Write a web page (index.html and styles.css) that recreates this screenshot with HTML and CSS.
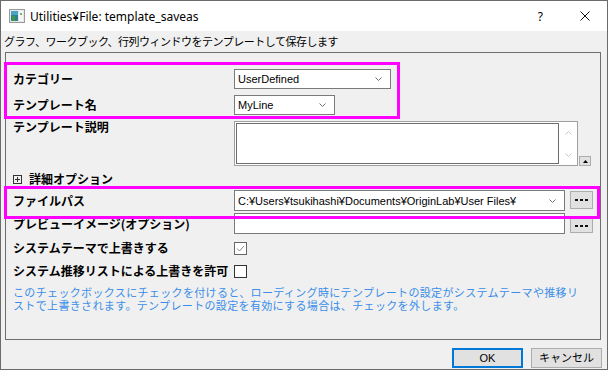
FILE: index.html
```html
<!DOCTYPE html>
<html lang="ja">
<head>
    <meta charset="UTF-8">
    <title>Utilities¥File: template_saveas</title>
    <link rel="stylesheet" href="styles.css">
</head>
<body>
    <div class="window">
        <div class="titlebar">
            <svg class="app-icon" width="16" height="14" viewBox="0 0 16 14">
                <rect x="0.5" y="0.5" width="15" height="13" fill="#e8e8e8" stroke="#9a9a9a"/>
                <rect x="2" y="2" width="7" height="10" fill="#2e7f8f"/>
                <rect x="2" y="2" width="7" height="4" fill="#4aa3c0"/>
                <rect x="3" y="7" width="3" height="5" fill="#3c9a4a"/>
                <rect x="10" y="2" width="4" height="10" fill="#f6f6f6"/>
                <rect x="11" y="4" width="2" height="2" fill="#6fb86f"/>
            </svg>
            <span class="title">Utilities¥File: template_saveas</span>
            <span class="help">?</span>
            <svg class="close" width="10" height="10" viewBox="0 0 10 10">
                <path d="M0.5 0.5 L9.5 9.5 M9.5 0.5 L0.5 9.5" stroke="#111" stroke-width="1"/>
            </svg>
        </div>

        <div class="subtitle">グラフ、ワークブック、行列ウィンドウをテンプレートして保存します</div>

        <div class="panel">
            <div class="row h20">
                <label>カテゴリー</label>
                <div class="ctl">
                    <div class="combo w157">
                        <span>UserDefined</span>
                        <svg class="chev" width="7" height="4" viewBox="0 0 7 4"><polyline points="0.5,0.5 3.5,3.5 6.5,0.5" fill="none" stroke="#707070"/></svg>
                    </div>
                </div>
            </div>

            <div class="row h20 gap6">
                <label>テンプレート名</label>
                <div class="ctl">
                    <div class="combo w101">
                        <span>MyLine</span>
                        <svg class="chev" width="7" height="4" viewBox="0 0 7 4"><polyline points="0.5,0.5 3.5,3.5 6.5,0.5" fill="none" stroke="#707070"/></svg>
                    </div>
                </div>
            </div>

            <div class="row row-memo gap6">
                <label>テンプレート説明</label>
                <div class="ctl bottom">
                    <div class="memo">
                        <div class="memo-field"></div>
                        <div class="memo-scroll">
                            <svg width="7" height="4" viewBox="0 0 7 4"><polyline points="0.5,3.5 3.5,0.5 6.5,3.5" fill="none" stroke="#c6c6c6"/></svg>
                            <svg width="7" height="4" viewBox="0 0 7 4"><polyline points="0.5,0.5 3.5,3.5 6.5,0.5" fill="none" stroke="#c6c6c6"/></svg>
                        </div>
                    </div>
                    <div class="spin">
                        <svg width="5" height="3" viewBox="0 0 5 3"><polygon points="0,3 2.5,0 5,3" fill="#000"/></svg>
                    </div>
                </div>
            </div>

            <div class="row row-more">
                <label class="more">
                    <svg width="9" height="9" viewBox="0 0 9 9"><rect x="0.5" y="0.5" width="8" height="8" fill="none" stroke="#333"/><path d="M2 4.5 H7 M4.5 2 V7" stroke="#333"/></svg>
                    詳細オプション
                </label>
            </div>

            <div class="row h21">
                <label>ファイルパス</label>
                <div class="ctl">
                    <div class="combo w331">
                        <span>C:¥Users¥tsukihashi¥Documents¥OriginLab¥User Files¥</span>
                        <svg class="chev" width="7" height="4" viewBox="0 0 7 4"><polyline points="0.5,0.5 3.5,3.5 6.5,0.5" fill="none" stroke="#707070"/></svg>
                    </div>
                    <div class="dots">
                        <svg width="13" height="2" viewBox="0 0 13 2"><rect x="0" y="0" width="3" height="2" fill="#111"/><rect x="5" y="0" width="3" height="2" fill="#111"/><rect x="10" y="0" width="3" height="2" fill="#111"/></svg>
                    </div>
                </div>
            </div>

            <div class="row h21 gap2">
                <label>プレビューイメージ(オプション)</label>
                <div class="ctl bottom">
                    <div class="field w331"></div>
                    <div class="dots short">
                        <svg width="13" height="2" viewBox="0 0 13 2"><rect x="0" y="0" width="3" height="2" fill="#111"/><rect x="5" y="0" width="3" height="2" fill="#111"/><rect x="10" y="0" width="3" height="2" fill="#111"/></svg>
                    </div>
                </div>
            </div>

            <div class="row h24 gap2">
                <label>システムテーマで上書きする</label>
                <div class="ctl">
                    <div class="check checked">
                        <svg width="11" height="11" viewBox="0 0 11 11"><polyline points="2,5.5 4.5,8 9,3" fill="none" stroke="#8a8a8a" stroke-width="1"/></svg>
                    </div>
                </div>
            </div>

            <div class="row h22">
                <label>システム推移リストによる上書きを許可</label>
                <div class="ctl">
                    <div class="check"></div>
                </div>
            </div>

            <p class="note">このチェックボックスにチェックを付けると、ローディング時にテンプレートの設定がシステムテーマや推移リ<br>ストで上書きされます。テンプレートの設定を有効にする場合は、チェックを外します。</p>

            <div class="highlight hl-top"></div>
            <div class="highlight hl-path"></div>
        </div>

        <div class="footer">
            <button class="btn default">OK</button>
            <button class="btn">キャンセル</button>
        </div>
    </div>
</body>
</html>
```

FILE: styles.css
```css
body {
    margin: 0;
    font-family: "Noto Sans CJK JP", sans-serif;
    color: #000;
}

.window {
    width: 608px;
    height: 370px;
    box-sizing: border-box;
    border: 1px solid #6b6b6b;
    background-color: #f0f0f0;
    display: flex;
    flex-direction: column;
}

.titlebar {
    height: 30px;
    background-color: #fff;
    display: flex;
    align-items: center;
}

.app-icon {
    margin-left: 8px;
}

.title {
    margin-left: 5px;
    font-family: "Noto Sans", "Liberation Sans", sans-serif;
    font-size: 12px;
}

.help {
    margin-left: auto;
    font-family: "Noto Sans", sans-serif;
    font-size: 12px;
}

.close {
    margin-left: 37px;
    margin-right: 17px;
}

.subtitle {
    height: 21px;
    line-height: 21px;
    padding-left: 3px;
    font-size: 11px;
    letter-spacing: -0.5px;
}

.panel {
    position: relative;
    margin-left: 4px;
    width: 596px;
    height: 288px;
    box-sizing: border-box;
    border: 1px solid #6e6e6e;
    padding: 16px 0 0 7px;
}

.row {
    display: grid;
    grid-template-columns: 221px auto;
    align-items: center;
}

.row label {
    font-size: 12px;
    font-weight: bold;
    line-height: 14px;
    white-space: nowrap;
}

.h20 { height: 20px; }
.h21 { height: 21px; }
.h22 { height: 22px; }
.h24 { height: 24px; }
.gap6 { margin-top: 6px; }
.gap2 { margin-top: 2px; }

.ctl {
    display: flex;
    align-items: center;
    gap: 5px;
    height: 100%;
}

.ctl.bottom {
    align-items: flex-end;
}

.combo, .field {
    height: 100%;
    box-sizing: border-box;
    border: 1px solid #7a7a7a;
    background-color: #fff;
    display: flex;
    align-items: center;
    padding: 0 8px 0 3px;
    font-family: "Liberation Sans", sans-serif;
    font-size: 11px;
}

.combo span {
    flex: 1;
    white-space: nowrap;
}

.w157 { width: 157px; }
.w101 { width: 101px; }
.w331 { width: 331px; }

.row-memo {
    height: 45px;
    align-items: start;
}

.row-memo label {
    margin-top: -1px;
}

.row-memo .ctl {
    gap: 1px;
}

.memo {
    width: 344px;
    height: 45px;
    box-sizing: border-box;
    border: 1px solid #a0a0a0;
    background-color: #fff;
    display: flex;
}

.memo-field {
    flex: 1;
    margin: 1px 0 1px 1px;
    border: 1px solid #6d6d6d;
}

.memo-scroll {
    width: 18px;
    display: flex;
    flex-direction: column;
    justify-content: space-between;
    align-items: center;
    padding: 9px 0 8px;
}

.spin {
    width: 12px;
    height: 10px;
    box-sizing: border-box;
    border: 1px solid #adadad;
    background-color: #e1e1e1;
    display: flex;
    align-items: center;
    justify-content: center;
}

.row-more {
    height: 22px;
    margin-top: 2px;
}

.more {
    display: flex;
    align-items: center;
    gap: 7px;
    padding-left: 0;
}

.dots {
    width: 23px;
    height: 18px;
    box-sizing: border-box;
    border: 1px solid #adadad;
    background-color: #e1e1e1;
    display: flex;
    align-items: center;
    justify-content: center;
    margin-bottom: 1px;
}

.dots.short {
    height: 15px;
}

.check {
    width: 13px;
    height: 13px;
    box-sizing: border-box;
    border: 1px solid #333;
    background-color: #fff;
}

.check.checked {
    border-color: #666;
}

.check svg {
    display: block;
}

.note {
    margin: 4px 0 0;
    color: #3b8ee8;
    font-size: 11px;
    letter-spacing: 0.35px;
    line-height: 13px;
    white-space: nowrap;
}

.highlight {
    position: absolute;
    box-sizing: border-box;
    border: 3px solid #ff00ff;
}

.hl-top {
    left: -2px;
    top: 9px;
    width: 396px;
    height: 57px;
}

.hl-path {
    left: -2px;
    top: 133px;
    width: 596px;
    height: 33px;
}

.footer {
    display: flex;
    justify-content: flex-end;
    gap: 8px;
    margin-top: 8px;
    padding-right: 5px;
}

.btn {
    width: 71px;
    height: 20px;
    box-sizing: border-box;
    border: 1px solid #adadad;
    background-color: #e1e1e1;
    font-family: "Liberation Sans", "Noto Sans CJK JP", sans-serif;
    font-size: 11px;
    padding: 0;
    line-height: 16px;
}

.btn.default {
    border: 2px solid #0078d7;
}
```
